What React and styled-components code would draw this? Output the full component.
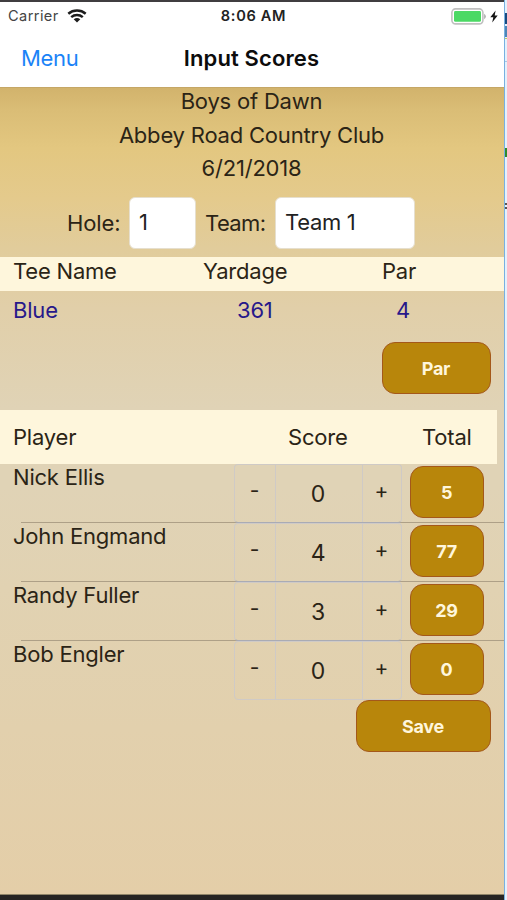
import React, { useState } from "react";
import styled, { createGlobalStyle } from "styled-components";

const GlobalStyle = createGlobalStyle`
  * {
    box-sizing: border-box;
  }
  body {
    margin: 0;
    overflow: hidden;
    font-family: Inter, "Liberation Sans", sans-serif;
  }
  button, input {
    font-family: inherit;
    margin: 0;
    padding: 0;
  }
`;

const Desktop = styled.div`
  display: flex;
  width: 507px;
  height: 900px;
  overflow: hidden;
  background: #2a2827;
`;

const Phone = styled.div`
  width: 504px;
  height: 900px;
  display: flex;
  flex-direction: column;
  border-top: 2px solid #403e40;
  border-bottom: 5px solid #262423;
`;

const Edge = styled.div`
  width: 3px;
  height: 900px;
  display: flex;
  flex-direction: column;
  border-left: 1px solid #78b0e0;
  background: #e4f1fd;
`;

const EdgeMark = styled.div`
  height: ${(p) => p.$h}px;
  margin-top: ${(p) => p.$gap}px;
  background: ${(p) => p.$color};
`;

const StatusBar = styled.div`
  height: 28px;
  flex: none;
  display: grid;
  grid-template-columns: 1fr auto 1fr;
  align-items: center;
  padding: 0 6px 0 8px;
  background: #fff;
  color: #222;
  font-size: 14.6px;
  .carrier {
    display: flex;
    align-items: center;
    gap: 8px;
    color: #444;
    letter-spacing: 0.4px;
  }
  .time {
    font-weight: 600;
    letter-spacing: 0.65px;
    padding-left: 1px;
  }
  .power {
    display: flex;
    justify-content: flex-end;
    align-items: center;
    gap: 4px;
  }
  svg {
    display: block;
  }
`;

const NavBar = styled.div`
  height: 57px;
  flex: none;
  display: grid;
  grid-template-columns: 1fr auto 1fr;
  align-items: center;
  padding: 0 22px 1px 21px;
  background: #fff;
  font-size: 22px;
  a {
    color: #1b83f7;
    text-decoration: none;
    letter-spacing: -0.3px;
  }
  h1 {
    margin: 0;
    font-size: 22px;
    font-weight: 600;
    color: #0c0c0c;
    letter-spacing: 0.12px;
  }
`;

const Content = styled.div`
  flex: 1;
  color: #2b2416;
  font-size: 22px;
  letter-spacing: -0.2px;
  border-top: 1px solid #c5a766;
  border-bottom: 1px solid #8f8468;
  background: linear-gradient(
    #d2b36c 0px,
    #dabd76 22px,
    #e3c780 60px,
    #e4ca8c 110px,
    #e1cc9b 160px,
    #e1cfa9 220px,
    #e0d3b6 320px,
    #e0d3b6 400px,
    #e1d2b2 500px,
    #e2d0ad 640px,
    #e4cea8 808px
  );
`;

const Heading = styled.div`
  display: flex;
  flex-direction: column;
  align-items: center;
  line-height: 26px;
  height: 109px;
  padding-right: 1px;
  div {
    height: 33.5px;
  }
`;

const Fields = styled.div`
  display: flex;
  align-items: center;
  height: 52px;
  padding-left: 67px;
`;

const Label = styled.label`
  width: ${(p) => p.$w}px;
  letter-spacing: ${(p) => p.$track}px;
`;

const Field = styled.input`
  width: ${(p) => p.$w}px;
  height: 52px;
  margin-right: ${(p) => p.$gap || 0}px;
  padding: 0 8px 2px 9px;
  border: 1px solid #e6dfce;
  border-radius: 6px;
  background: #fff;
  color: #222;
  font-size: 22px;
  letter-spacing: -0.3px;
`;

const TeeRow = styled.div`
  display: grid;
  grid-template-columns: 190px 110px 1fr;
  align-items: center;
  height: ${(p) => (p.$head ? 34 : 38)}px;
  margin-top: ${(p) => (p.$head ? 8 : 0)}px;
  padding: 0 0 ${(p) => (p.$head ? 6 : 0)}px 13px;
  background: ${(p) => (p.$head ? "#fef6dc" : "transparent")};
  color: ${(p) => (p.$head ? "#2b2416" : "#27188a")};
  span:nth-child(2) {
    padding-left: ${(p) => (p.$head ? 0 : 34)}px;
  }
  span:nth-child(3) {
    padding-left: ${(p) => (p.$head ? 69 : 83)}px;
  }
`;

const GoldButton = styled.button`
  display: block;
  width: ${(p) => p.$w}px;
  height: 52px;
  padding: 0 1px 0 0;
  border: 1.5px solid #a4581a;
  border-radius: 13px;
  background: #b8860b;
  color: #fff6dc;
  font-size: 18px;
  line-height: 23px;
  font-weight: 700;
  letter-spacing: -0.3px;
`;

const Actions = styled.div`
  display: flex;
  justify-content: flex-end;
  padding: ${(p) => p.$top}px 13px 0 0;
`;

const ScoreHead = styled.div`
  display: grid;
  grid-template-columns: 275px 134px 1fr;
  align-items: center;
  width: 497px;
  height: 54px;
  margin-top: 16px;
  padding-left: 13px;
  background: #fef6dc;
`;

const PlayerRow = styled.div`
  display: flex;
  height: 59px;
  background: ${(p) =>
    p.$last
      ? "none"
      : "linear-gradient(#aea087, #aea087) 21px 58px / 483px 1px no-repeat"};
`;

const Name = styled.div`
  width: 234px;
  padding-left: 13px;
  line-height: 27px;
`;

const Stepper = styled.div`
  display: grid;
  grid-template-columns: 40px 88px 1fr;
  width: 168px;
  height: 59px;
  border: 1px solid #cfcac6;
  border-bottom-color: ${(p) => (p.$last ? "#cfcac6" : "#a9abb5")};
  border-radius: 4px;
  button {
    border: none;
    background: none;
    color: #2b2416;
    font-size: 21px;
    padding-bottom: 6px;
    padding-right: 1px;
  }
`;

const Score = styled.div`
  display: flex;
  align-items: center;
  justify-content: center;
  padding: 1px 2px 0 0;
  border-left: 1px solid #cfcac6;
  border-right: 1px solid #cfcac6;
  font-size: 23px;
`;

const Total = styled.div`
  padding: 2px 0 0 8px;
`;

const WifiIcon = () => (
  <svg width="20" height="15" viewBox="0 0 20 15">
    <g fill="none" stroke="#1c1c1c" strokeWidth="2.5">
      <path d="M1.3 4.7a13.5 13.5 0 0 1 17.4 0" />
      <path d="M4.2 8.1a9 9 0 0 1 11.6 0" />
    </g>
    <path d="M6.7 10.3a5.2 5.2 0 0 1 6.6 0L10 13.6z" fill="#1c1c1c" />
  </svg>
);

const BatteryIcon = () => (
  <svg width="35" height="17" viewBox="0 0 35 17">
    <rect x="0.9" y="0.9" width="31" height="15" rx="3.6" fill="#fff" stroke="#c0c0c0" strokeWidth="1.6" />
    <rect x="3" y="3" width="27" height="10.8" rx="1.4" fill="#4bd964" />
    <path d="M33.2 5.8q1.6 1 1.6 2.7t-1.6 2.7z" fill="#aaa" />
  </svg>
);

const BoltIcon = () => (
  <svg width="8" height="13" viewBox="0 0 8 13" preserveAspectRatio="none">
    <path d="M5.6 0.4L0.3 7.2h3L2.2 12.4 7.7 5.5h-3z" fill="#151515" />
  </svg>
);

const App = () => {
  const [hole, setHole] = useState("1");
  const [team, setTeam] = useState("Team 1");
  const [players, setPlayers] = useState([
    { name: "Nick Ellis", score: 0, total: 5 },
    { name: "John Engmand", score: 4, total: 77 },
    { name: "Randy Fuller", score: 3, total: 29 },
    { name: "Bob Engler", score: 0, total: 0 },
  ]);

  const changeScore = (index, step) => {
    setPlayers(
      players.map((p, i) =>
        i === index ? { ...p, score: Math.max(0, p.score + step) } : p
      )
    );
  };

  return (
    <Desktop>
      <GlobalStyle />
      <Phone>
        <StatusBar>
          <div className="carrier">
            Carrier
            <WifiIcon />
          </div>
          <div className="time">8:06 AM</div>
          <div className="power">
            <BatteryIcon />
            <BoltIcon />
          </div>
        </StatusBar>
        <NavBar>
          <a href="#menu">Menu</a>
          <h1>Input Scores</h1>
        </NavBar>
        <Content>
          <Heading>
            <div>Boys of Dawn</div>
            <div>Abbey Road Country Club</div>
            <div>6/21/2018</div>
          </Heading>
          <Fields>
            <Label $w={62} $track={-0.1}>Hole:</Label>
            <Field $w={67} $gap={9} value={hole} onChange={(e) => setHole(e.target.value)} />
            <Label $w={70} $track={-0.6}>Team:</Label>
            <Field $w={140} value={team} onChange={(e) => setTeam(e.target.value)} />
          </Fields>
          <TeeRow $head>
            <span>Tee Name</span>
            <span>Yardage</span>
            <span>Par</span>
          </TeeRow>
          <TeeRow>
            <span>Blue</span>
            <span>361</span>
            <span>4</span>
          </TeeRow>
          <Actions $top={13}>
            <GoldButton $w={109}>Par</GoldButton>
          </Actions>
          <ScoreHead>
            <span>Player</span>
            <span>Score</span>
            <span>Total</span>
          </ScoreHead>
          {players.map((p, i) => (
            <PlayerRow key={p.name} $last={i === players.length - 1}>
              <Name>{p.name}</Name>
              <Stepper $last={i === players.length - 1}>
                <button onClick={() => changeScore(i, -1)}>-</button>
                <Score>{p.score}</Score>
                <button onClick={() => changeScore(i, 1)}>+</button>
              </Stepper>
              <Total>
                <GoldButton $w={74}>{p.total}</GoldButton>
              </Total>
            </PlayerRow>
          ))}
          <Actions $top={0}>
            <GoldButton $w={135}>Save</GoldButton>
          </Actions>
        </Content>
      </Phone>
      <Edge>
        <EdgeMark $gap={13} $h={11} $color="#174a80" />
        <EdgeMark $gap={2} $h={11} $color="#4d86b8" />
        <EdgeMark $gap={1} $h={1} $color="#b9cf63" />
        <EdgeMark $gap={22} $h={1} $color="#a9c6e4" />
        <EdgeMark $gap={86} $h={9} $color="#2e8a2e" />
        <EdgeMark $gap={46} $h={2} $color="#555" />
        <EdgeMark $gap={2} $h={2} $color="#555" />
      </Edge>
    </Desktop>
  );
};

export default App;
